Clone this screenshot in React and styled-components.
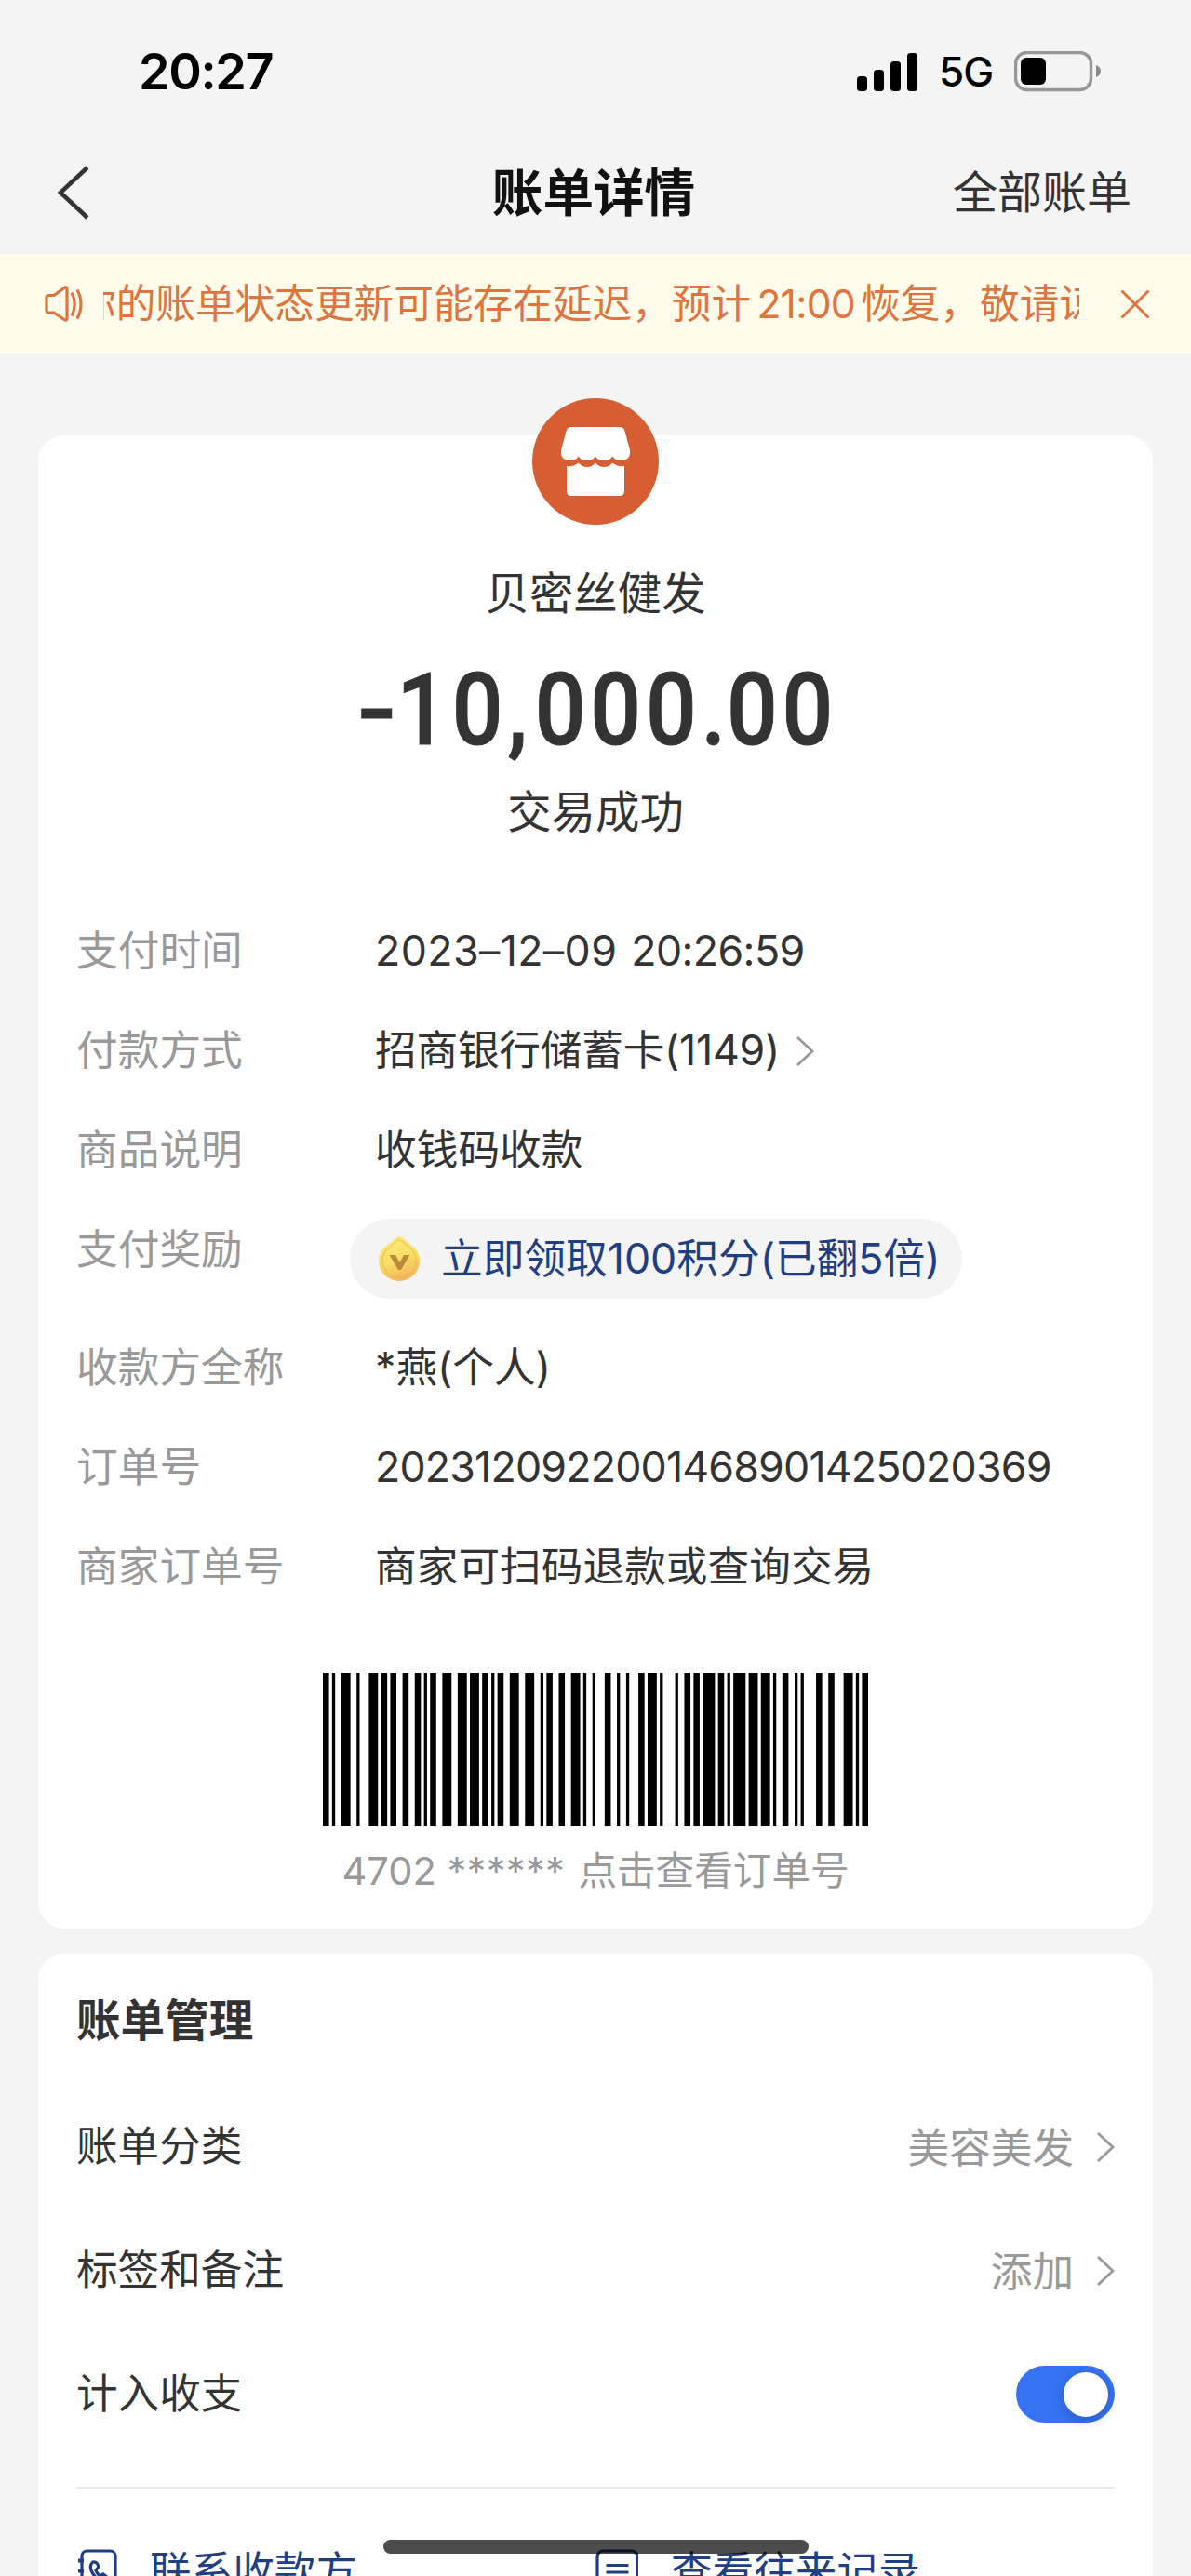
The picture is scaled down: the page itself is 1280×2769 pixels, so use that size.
import { useState } from "react"
import styled, { createGlobalStyle, css } from "styled-components"

const GlobalStyle = createGlobalStyle`
  * {
    box-sizing: border-box;
  }

  body {
    margin: 0;
    background-color: #f4f4f4;
    color: #333;
    font-family: Inter, "Noto Sans CJK SC", sans-serif;
  }

  button {
    border: none;
    padding: 0;
    background: none;
    color: inherit;
    font: inherit;
    text-align: left;
  }

  svg {
    display: block;
    flex-shrink: 0;
  }
`

const Screen = styled.div`
  width: 1280px;
  height: 2769px;
  overflow: hidden;
  position: relative;
`

const StatusBar = styled.div`
  display: flex;
  justify-content: space-between;
  align-items: center;
  height: 138px;
  padding: 16px 96px 0 149px;
  color: #000;
`

const Clock = styled.div`
  padding-bottom: 2px;
  font-size: 54px;
  font-weight: 600;
  letter-spacing: -1.4px;
`

const StatusIcons = styled.div`
  display: flex;
  align-items: center;
`

const Network = styled.span`
  width: 79px;
  padding-left: 22px;
  margin-right: 24px;
  font-size: 44px;
  font-weight: 500;
  letter-spacing: -1px;
  line-height: 44px;
`

const Header = styled.header`
  display: grid;
  grid-template-columns: 1fr auto 1fr;
  align-items: center;
  height: 135px;
  padding: 2px 64px 0 60px;
`

const Title = styled.h1`
  margin: 0;
  padding-top: 1px;
  color: #111;
  font-size: 54.6px;
  font-weight: 700;
  line-height: 60px;
`

const AllBills = styled.button`
  justify-self: end;
  font-size: 48px;
  line-height: 60px;
`

const Notice = styled.div`
  display: flex;
  align-items: center;
  height: 107px;
  padding: 0 44px 0 47px;
  background-color: #fffcec;
  color: #dc7540;
`

const NoticeText = styled.div`
  flex: 1;
  overflow: hidden;
  margin: 0 44px 0 21px;
  white-space: nowrap;
  font-size: 42.67px;
  line-height: 60px;
  text-indent: -29px;
`

const Time = styled.span`
  display: inline-block;
  width: 118px;
  text-align: center;
  text-indent: 0;
  letter-spacing: -0.8px;
`

const Card = styled.section`
  display: flow-root;
  margin: ${(props) => props.$top}px 41px 0;
  height: ${(props) => props.$height}px;
  padding: 0 41px;
  border-radius: 28px;
  background-color: #fff;
`

const Summary = styled.div`
  display: flex;
  flex-direction: column;
  align-items: center;
  height: 541px;
  margin-top: -40px;
`

const Avatar = styled.div`
  display: flex;
  justify-content: center;
  align-items: center;
  width: 136px;
  height: 136px;
  border-radius: 50%;
  background-color: #d75d32;
`

const Merchant = styled.div`
  margin-top: 44px;
  font-size: 47.4px;
  line-height: 60px;
`

const Amount = styled.div`
  display: flex;
  margin: 46px 0 0 10px;
  font-family: Roboto, sans-serif;
  font-size: 107px;
  font-weight: 500;
  line-height: 100px;
  letter-spacing: 5.4px;
  transform: scaleX(0.9);
  -webkit-text-stroke: 1px #333;
`

const Sign = styled.span`
  width: 32px;
  margin: 0 15px 0 -6px;
  transform: scaleX(1.28);
  transform-origin: left;
`

const Mark = styled.span`
  width: ${(props) => props.$width}px;
`

const Status = styled.div`
  margin-top: 29px;
  font-size: 47.4px;
  line-height: 60px;
`

const Details = styled.dl`
  margin: 0;
`

const DetailRow = styled.div`
  display: flex;
  height: ${(props) => (props.$tall ? 127 : 107)}px;
  font-size: 44.7px;
  line-height: 107px;
`

const Label = styled.dt`
  width: 321px;
  color: #999;
`

const Value = styled.dd`
  display: flex;
  align-items: center;
  margin: 0;
  height: 107px;
  letter-spacing: ${(props) => props.$spacing || 0}px;

  svg {
    margin-left: 17px;
  }
`

const PayDate = styled.span`
  margin-right: 15px;
  letter-spacing: 0.4px;
`

const Reward = styled.button`
  display: flex;
  align-items: center;
  height: 86px;
  width: 658px;
  margin: 19px 0 0 -27px;
  padding-left: 30px;
  border-radius: 43px;
  background-color: #f4f4f4;
  color: #1f3f82;
  line-height: 86px;
  white-space: nowrap;

  svg {
    margin: 0 22px 0 0;
  }
`

const OrderCode = styled.button`
  display: flex;
  flex-direction: column;
  align-items: center;
  width: 100%;
  margin-top: 60px;
  color: #999;
  font-size: 41.6px;
`

const CodeText = styled.div`
  display: flex;
  margin-top: 18px;
  line-height: 60px;
`

const CodePrefix = styled.span`
  width: 113px;
`

const Stars = styled.span`
  width: 141px;
  letter-spacing: 0.3px;
`

const SectionTitle = styled.h2`
  margin: 0;
  padding-top: 42px;
  height: 141px;
  font-size: 47.6px;
  font-weight: 700;
  line-height: 60px;
`

const SettingRow = styled.div`
  display: flex;
  justify-content: space-between;
  align-items: center;
  height: 133px;
  font-size: 44.6px;
`

const SettingName = styled.span`
  padding-bottom: 8px;
`

const SettingValue = styled.button`
  display: flex;
  align-items: center;
  gap: 24px;
  padding-bottom: 4px;
  color: #999;

  svg {
    margin-top: 4px;
  }
`

const Switch = styled.button`
  width: 106px;
  height: 61px;
  padding: 7px;
  border-radius: 31px;
  background-color: ${(props) => (props.$on ? "#3672f2" : "#ddd")};
`

const Knob = styled.span`
  display: block;
  width: 48px;
  height: 48px;
  border-radius: 50%;
  background-color: #fff;
  box-shadow: 0 4px 14px rgba(0, 0, 0, 0.2);

  ${(props) =>
    props.$on &&
    css`
      margin-left: 44px;
    `}
`

const Actions = styled.div`
  display: grid;
  grid-template-columns: 1fr 1fr;
  margin-top: 33px;
  padding-top: 60px;
  border-top: 2px solid #e8e8e8;
`

const Action = styled.button`
  display: flex;
  align-items: center;
  gap: 35px;
  color: #1f3f82;
  font-size: 44.6px;
  line-height: 58px;
`

const HomeIndicator = styled.div`
  position: absolute;
  left: 412px;
  top: 2730px;
  width: 457px;
  height: 15px;
  border-radius: 8px;
  background-color: rgba(0, 0, 0, 0.7);
`

// Code 128 symbols, alternating bar and gap widths
const BARCODE = [
  "211232",
  "133121",
  "222221",
  "112232",
  "313121",
  "112232",
  "321122",
  "223112",
  "132212",
  "132131",
  "141221",
  "214121",
  "114131",
  "311222",
  "111422",
  "2331112",
].join("")

function Barcode() {
  const bars = []
  let x = 0
  BARCODE.split("").forEach((n, i) => {
    const width = Number(n)
    if (i % 2 === 0) bars.push(<rect key={i} x={x} width={width} height="165" />)
    x += width
  })

  return (
    <svg
      width="586"
      height="165"
      viewBox={`0 0 ${x} 165`}
      preserveAspectRatio="none"
      fill="#000"
    >
      {bars}
    </svg>
  )
}

function SignalIcon() {
  return (
    <svg width="66" height="42" viewBox="0 0 66 42">
      <rect x="0" y="26" width="11" height="16" rx="3.5" />
      <rect x="18" y="19" width="11" height="23" rx="3.5" />
      <rect x="36" y="10" width="11" height="32" rx="3.5" />
      <rect x="54" y="1" width="11" height="41" rx="3.5" />
    </svg>
  )
}

function BatteryIcon() {
  return (
    <svg width="94" height="44" viewBox="0 0 94 44">
      <rect
        x="1.5"
        y="1.5"
        width="81"
        height="40"
        rx="12"
        fill="none"
        stroke="#979797"
        strokeWidth="3.4"
      />
      <rect x="7" y="7" width="27" height="29" rx="6" />
      <path d="M88 15c3 1 5 3.500 5 6.500s-2 5.500-5 6.500z" fill="#8a8a8a" />
    </svg>
  )
}

function BackIcon() {
  return (
    <svg width="36" height="60" viewBox="0 0 36 60" fill="none">
      <path d="M34 3L5 30l29 27" stroke="#333" strokeWidth="4.500" />
    </svg>
  )
}

function ChevronIcon() {
  return (
    <svg width="20" height="34" viewBox="0 0 20 34" fill="none">
      <path d="M2 2l16 15L2 32" stroke="#999" strokeWidth="2.800" />
    </svg>
  )
}

function SpeakerIcon() {
  return (
    <svg
      width="43"
      height="48"
      viewBox="0 0 43 48"
      fill="none"
      stroke="currentColor"
      strokeWidth="3.200"
      strokeLinejoin="round"
    >
      <path d="M3 17q0-2.500 2.500-2.500H11L22 6.500q3-2 3 1.500v31q0 3.500-3 1.500L11 33H5.500Q3 33 3 30.500z" />
      <path d="M30 11.500q6.500 12.500 0 25M36 8.500q8 15.500 0 31" />
    </svg>
  )
}

function CloseIcon() {
  return (
    <svg width="32" height="32" viewBox="0 0 32 32" fill="none">
      <path d="M1.500 1.500l29 29M30.500 1.500l-29 29" stroke="currentColor" strokeWidth="3" />
    </svg>
  )
}

function ShopIcon() {
  return (
    <svg width="76" height="76" viewBox="0 0 76 76" fill="#fff">
      <path d="M12 1h52q4.500 0 5.500 4.500l5.500 20.500q1 11-10 11-6 0-8.500-4.500-3 4.500-9.500 4.500T38 32.500q-3 4.500-9 4.500t-9.500-4.500Q17 37 11 37 0 37 1 26L6.500 5.500Q7.500 1 12 1z" />
      <path d="M7 43q8 1 12.500-3.500Q24 44 29 44t9-4.500Q42 44 47 44t9.500-4.500Q61 44 69 43v27q0 5-5 5H12q-5 0-5-5z" />
    </svg>
  )
}

function CoinIcon() {
  return (
    <svg width="46" height="50" viewBox="0 0 46 50">
      <defs>
        <linearGradient id="coin" x1="0" y1="0" x2="0.300" y2="1">
          <stop offset="0" stopColor="#fbe97c" />
          <stop offset="0.600" stopColor="#fade68" />
          <stop offset="1" stopColor="#f3b95a" />
        </linearGradient>
      </defs>
      <path
        d="M23 1q2 0 4 2l11 9q7 6 7 15a22 22 0 0 1-44 0q0-9 7-15l11-9q2-2 4-2z"
        fill="url(#coin)"
      />
      <path
        d="M23 5q2 0 3 1l9 8q6 5 6 13a18 18 0 0 1-36 0q0-8 6-13l9-8q1-1 3-1z"
        fill="none"
        stroke="#e9b950"
        strokeWidth="1"
      />
      <path d="M12.500 21h6.500l4.500 8 4.500-8h6.500L25 37h-3z" fill="#b98a3c" />
    </svg>
  )
}

function ContactIcon() {
  return (
    <svg
      width="44"
      height="48"
      viewBox="0 0 44 48"
      fill="none"
      stroke="currentColor"
      strokeWidth="3.200"
    >
      <rect x="6" y="2" width="36" height="44" rx="5.500" />
      <path d="M2 12.500h6M2 23.500h6M2 34.500h6" strokeWidth="4" />
      <path d="M18 14q-4 3-2 9 4 9 12 12 5 0 6-4l-5-4-4 2q-3-3-4-6l3-4q-2-6-6-5z" />
    </svg>
  )
}

function RecordIcon() {
  return (
    <svg
      width="46"
      height="48"
      viewBox="0 0 46 48"
      fill="none"
      stroke="currentColor"
      strokeWidth="3.200"
    >
      <rect x="2" y="2" width="43" height="44" rx="6" />
      <path d="M11.500 17.500h24M11.500 25h24" />
    </svg>
  )
}

export default function App() {
  const [counted, setCounted] = useState(true)

  return (
    <>
      <GlobalStyle />
      <Screen>
        <StatusBar>
          <Clock>20:27</Clock>
          <StatusIcons>
            <SignalIcon />
            <Network>5G</Network>
            <BatteryIcon />
          </StatusIcons>
        </StatusBar>

        <Header>
          <BackIcon />
          <Title>账单详情</Title>
          <AllBills>全部账单</AllBills>
        </Header>

        <Notice>
          <SpeakerIcon />
          <NoticeText>
            你的账单状态更新可能存在延迟，预计<Time>21:00</Time>恢复，敬请谅
          </NoticeText>
          <CloseIcon />
        </Notice>

        <Card $top={88} $height={1605}>
          <Summary>
            <Avatar>
              <ShopIcon />
            </Avatar>
            <Merchant>贝密丝健发</Merchant>
            <Amount>
              <Sign>-</Sign>
              <span>10</span>
              <Mark $width={32.5}>,</Mark>
              <span>000</span>
              <Mark $width={30.5}>.</Mark>
              <span>00</span>
            </Amount>
            <Status>交易成功</Status>
          </Summary>

          <Details>
            <DetailRow>
              <Label>支付时间</Label>
              <Value $spacing={-0.6}>
                <PayDate>2023–12–09</PayDate> 20:26:59
              </Value>
            </DetailRow>
            <DetailRow>
              <Label>付款方式</Label>
              <Value $spacing={-0.25}>
                招商银行储蓄卡(1149)
                <ChevronIcon />
              </Value>
            </DetailRow>
            <DetailRow>
              <Label>商品说明</Label>
              <Value>收钱码收款</Value>
            </DetailRow>
            <DetailRow $tall>
              <Label>支付奖励</Label>
              <Value>
                <Reward>
                  <CoinIcon />
                  立即领取100积分(已翻5倍)
                </Reward>
              </Value>
            </DetailRow>
            <DetailRow>
              <Label>收款方全称</Label>
              <Value>*燕(个人)</Value>
            </DetailRow>
            <DetailRow>
              <Label>订单号</Label>
              <Value $spacing={-0.8}>2023120922001468901425020369</Value>
            </DetailRow>
            <DetailRow>
              <Label>商家订单号</Label>
              <Value>商家可扫码退款或查询交易</Value>
            </DetailRow>
          </Details>

          <OrderCode>
            <Barcode />
            <CodeText>
              <CodePrefix>4702</CodePrefix>
              <Stars>******</Stars>
              <span>点击查看订单号</span>
            </CodeText>
          </OrderCode>
        </Card>

        <Card $top={27} $height={800}>
          <SectionTitle>账单管理</SectionTitle>
          <SettingRow>
            <SettingName>账单分类</SettingName>
            <SettingValue>
              美容美发
              <ChevronIcon />
            </SettingValue>
          </SettingRow>
          <SettingRow>
            <SettingName>标签和备注</SettingName>
            <SettingValue>
              添加
              <ChevronIcon />
            </SettingValue>
          </SettingRow>
          <SettingRow>
            <SettingName>计入收支</SettingName>
            <Switch $on={counted} onClick={() => setCounted((on) => !on)}>
              <Knob $on={counted} />
            </Switch>
          </SettingRow>
          <Actions>
            <Action>
              <ContactIcon />
              联系收款方
            </Action>
            <Action>
              <RecordIcon />
              查看往来记录
            </Action>
          </Actions>
        </Card>

        <HomeIndicator />
      </Screen>
    </>
  )
}
